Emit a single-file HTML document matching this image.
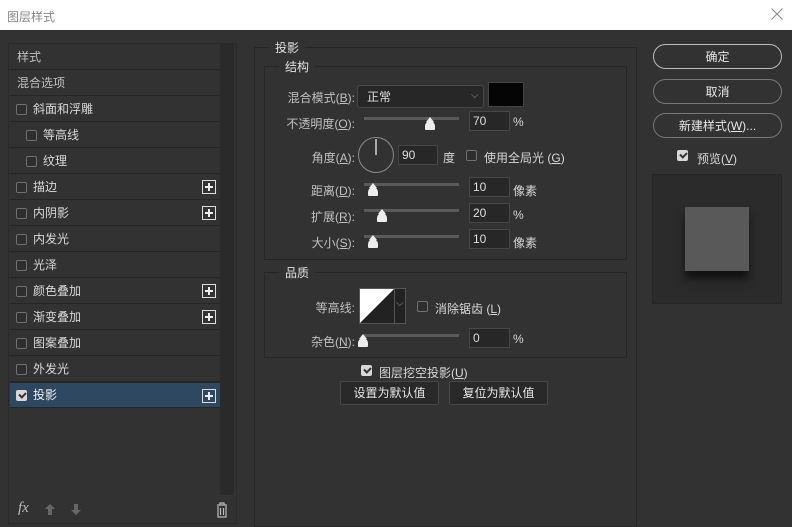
<!DOCTYPE html>
<html><head><meta charset="utf-8"><style>
*{box-sizing:border-box;margin:0;padding:0}
body{width:792px;height:523px;background:#323232;font-family:"Liberation Sans","Noto Sans CJK SC",sans-serif;font-size:12px;color:#d6d6d6;position:relative;overflow:hidden}
.a{position:absolute}
.title{left:0;top:0;width:792px;height:30px;background:#fff;color:#888;font-size:12px}
.row{position:absolute;left:10px;width:210px;height:26px;border-bottom:1px solid #262626;line-height:27px;color:#d8d8d8}
.cb{position:absolute;width:11px;height:11px;border:1px solid #707070;border-radius:2px;background:#2e2e2e}
.cbc{background:#d8d8d8;border-color:#d8d8d8}
.cbc::after{content:"";position:absolute;left:2px;top:1px;width:5px;height:3px;border-left:2px solid #333;border-bottom:2px solid #333;transform:rotate(-45deg)}
.plus{position:absolute;left:192px;top:6px;width:14px;height:14px;border:1px solid #ddd}
.plus::before{content:"";position:absolute;left:2px;top:5px;width:8px;height:2px;background:#eee}
.plus::after{content:"";position:absolute;left:5px;top:2px;width:2px;height:8px;background:#eee}
.box{position:absolute;border:1px solid #262626}
.leg{position:absolute;background:#323232;padding:0 6px;color:#e0e0e0}
.lab{position:absolute;text-align:right;color:#c0c0c0}
.inp{position:absolute;height:20px;background:#272727;border:1px solid #474747;padding-left:3px;line-height:18px;color:#ddd}
.sl{position:absolute;height:3px;background:#5a5a5a}
.th{position:absolute;width:10px;height:9px;background:#eee;border-radius:5px 5px 1px 1px}
.th::before{content:"";position:absolute;left:1px;top:-4px;border-left:4px solid transparent;border-right:4px solid transparent;border-bottom:5px solid #eee}
.btn{position:absolute;height:25px;border:1px solid #777;border-radius:13px;text-align:center;line-height:24px;color:#e6e6e6}
.rb{position:absolute;height:24px;border:1px solid #474747;background:#292929;text-align:center;line-height:23px;color:#e6e6e6;border-radius:2px}
</style></head><body>
<div class="a title"><span class="a" style="left:7px;top:8px">图层样式</span><svg class="a" style="left:771px;top:8px" width="12" height="12"><path d="M0.5 0.5 L11.5 11.5 M11.5 0.5 L0.5 11.5" stroke="#888" stroke-width="1"/></svg></div>

<div class="box" style="left:8px;top:43px;width:229px;height:481px;border-color:#2a2a2a"></div>
<div class="a" style="left:220px;top:44px;width:14px;height:451px;background:#2a2a2a"></div>
<div class="row" style="top:44px;padding-left:7px;color:#c0c0c0">样式</div>
<div class="row" style="top:70px;padding-left:7px;color:#c0c0c0">混合选项</div>
<div class="row" style="top:96px"><div class="cb" style="left:6px;top:8px"></div><span class="a" style="left:23px">斜面和浮雕</span></div>
<div class="row" style="top:122px"><div class="cb" style="left:16px;top:8px"></div><span class="a" style="left:33px">等高线</span></div>
<div class="row" style="top:148px"><div class="cb" style="left:16px;top:8px"></div><span class="a" style="left:33px">纹理</span></div>
<div class="row" style="top:174px"><div class="cb" style="left:6px;top:8px"></div><span class="a" style="left:23px">描边</span><div class="plus"></div></div>
<div class="row" style="top:200px"><div class="cb" style="left:6px;top:8px"></div><span class="a" style="left:23px">内阴影</span><div class="plus"></div></div>
<div class="row" style="top:226px"><div class="cb" style="left:6px;top:8px"></div><span class="a" style="left:23px">内发光</span></div>
<div class="row" style="top:252px"><div class="cb" style="left:6px;top:8px"></div><span class="a" style="left:23px">光泽</span></div>
<div class="row" style="top:278px"><div class="cb" style="left:6px;top:8px"></div><span class="a" style="left:23px">颜色叠加</span><div class="plus"></div></div>
<div class="row" style="top:304px"><div class="cb" style="left:6px;top:8px"></div><span class="a" style="left:23px">渐变叠加</span><div class="plus"></div></div>
<div class="row" style="top:330px"><div class="cb" style="left:6px;top:8px"></div><span class="a" style="left:23px">图案叠加</span></div>
<div class="row" style="top:356px"><div class="cb" style="left:6px;top:8px"></div><span class="a" style="left:23px">外发光</span></div>
<div class="row" style="top:382px;background:#2f4861;border-top:1px solid #262626"><div class="cb cbc" style="left:6px;top:7px"></div><span class="a" style="left:23px;color:#eee;top:-1px">投影</span><div class="plus"></div></div>
<span class="a" style="left:18px;top:500px;font-style:italic;font-family:'Liberation Serif',serif;font-size:15px;color:#bbb">fx</span>
<svg class="a" style="left:44px;top:503px" width="40" height="14"><path d="M6 1 L11 6 L8 6 L8 12 L4 12 L4 6 L1 6Z" fill="#666"/><path d="M30 1 L30 7 L27 7 L32 12 L37 7 L34 7 L34 1Z" fill="#666"/></svg>
<svg class="a" style="left:215px;top:502px" width="14" height="16"><path d="M2 3 H12 M5 3 V1 H9 V3 M3 4 V15 H11 V4 M5.5 6 V13 M8.5 6 V13" stroke="#bbb" fill="none" stroke-width="1.2"/></svg>

<div class="box" style="left:254px;top:47px;width:383px;height:480px"></div>
<div class="leg" style="left:269px;top:39px">投影</div>
<div class="box" style="left:264px;top:66px;width:363px;height:194px"></div>
<div class="leg" style="left:279px;top:58px">结构</div>
<div class="lab" style="left:270px;top:89px;width:85px">混合模式(<u>B</u>):</div>
<div class="inp" style="left:357px;top:85px;width:127px;height:23px;border-radius:3px;line-height:22px;padding-left:9px">正常<span class="a" style="left:113px;top:-1px;color:#999;font-size:10px">⌵</span></div>
<div class="a" style="left:488px;top:82px;width:36px;height:25px;background:#050505;border:1px solid #444"></div>
<div class="lab" style="left:270px;top:115px;width:85px">不透明度(<u>O</u>):</div>
<div class="sl" style="left:364px;top:117px;width:95px"></div><div class="th" style="left:425px;top:121px"></div>
<div class="inp" style="left:469px;top:111px;width:41px">70</div><span class="a" style="left:513px;top:115px">%</span>
<div class="lab" style="left:270px;top:149px;width:85px">角度(<u>A</u>):</div>
<div class="a" style="left:358px;top:137px;width:36px;height:36px;border:1px solid #8a8a8a;border-radius:50%"></div>
<div class="a" style="left:375px;top:139px;width:2px;height:16px;background:#aaa"></div>
<div class="inp" style="left:398px;top:145px;width:40px">90</div><span class="a" style="left:443px;top:149px">度</span>
<div class="cb" style="left:466px;top:150px"></div><span class="a" style="left:484px;top:149px">使用全局光 (<u>G</u>)</span>
<div class="lab" style="left:270px;top:182px;width:85px">距离(<u>D</u>):</div>
<div class="sl" style="left:364px;top:183px;width:95px"></div><div class="th" style="left:368px;top:187px"></div>
<div class="inp" style="left:469px;top:177px;width:41px">10</div><span class="a" style="left:513px;top:182px">像素</span>
<div class="lab" style="left:270px;top:208px;width:85px">扩展(<u>R</u>):</div>
<div class="sl" style="left:364px;top:209px;width:95px"></div><div class="th" style="left:377px;top:213px"></div>
<div class="inp" style="left:469px;top:203px;width:41px">20</div><span class="a" style="left:513px;top:208px">%</span>
<div class="lab" style="left:270px;top:234px;width:85px">大小(<u>S</u>):</div>
<div class="sl" style="left:364px;top:235px;width:95px"></div><div class="th" style="left:368px;top:239px"></div>
<div class="inp" style="left:469px;top:229px;width:41px">10</div><span class="a" style="left:513px;top:234px">像素</span>

<div class="box" style="left:264px;top:272px;width:363px;height:86px"></div>
<div class="leg" style="left:279px;top:264px">品质</div>
<div class="lab" style="left:270px;top:299px;width:85px">等高线:</div>
<div class="a" style="left:359px;top:288px;width:47px;height:36px;border:1px solid #555;background:#222"></div>
<svg class="a" style="left:360px;top:289px" width="34" height="34"><path d="M0 0 H34 L0 34Z" fill="#fff"/></svg>
<div class="a" style="left:394px;top:289px;width:1px;height:34px;background:#555"></div>
<span class="a" style="left:396px;top:298px;color:#999;font-size:10px">⌵</span>
<div class="cb" style="left:417px;top:301px"></div><span class="a" style="left:435px;top:300px">消除锯齿 (<u>L</u>)</span>
<div class="lab" style="left:270px;top:333px;width:85px">杂色(<u>N</u>):</div>
<div class="sl" style="left:364px;top:334px;width:95px"></div><div class="th" style="left:358px;top:338px"></div>
<div class="inp" style="left:469px;top:328px;width:41px">0</div><span class="a" style="left:513px;top:332px">%</span>
<div class="cb cbc" style="left:361px;top:365px"></div><span class="a" style="left:379px;top:364px">图层挖空投影(<u>U</u>)</span>
<div class="rb" style="left:340px;top:381px;width:99px">设置为默认值</div>
<div class="rb" style="left:449px;top:381px;width:99px">复位为默认值</div>

<div class="btn" style="left:653px;top:44px;width:129px;border-color:#bbb">确定</div>
<div class="btn" style="left:653px;top:79px;width:129px">取消</div>
<div class="btn" style="left:653px;top:113px;width:129px">新建样式(<u>W</u>)...</div>
<div class="cb cbc" style="left:677px;top:150px"></div><span class="a" style="left:697px;top:150px">预览(<u>V</u>)</span>
<div class="a" style="left:652px;top:174px;width:130px;height:130px;background:#2b2b2b;border:1px solid #262626"></div>
<div class="a" style="left:685px;top:207px;width:64px;height:64px;background:#595959;box-shadow:0 8px 8px rgba(0,0,0,.6)"></div>
</body></html>
